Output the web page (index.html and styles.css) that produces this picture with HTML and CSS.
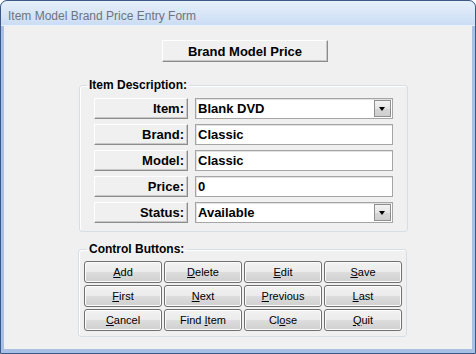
FILE: index.html
```html
<!DOCTYPE html>
<html lang="en">
<head>
    <meta charset="UTF-8">
    <title>Item Model Brand Price Entry Form</title>
    <link rel="stylesheet" href="styles.css">
</head>
<body>
    <div class="window">
        <div class="titlebar">Item Model Brand Price Entry Form</div>

        <div class="client">
            <button class="classic heading">Brand Model Price</button>

            <!-- Item details -->
            <fieldset class="group details">
                <legend>Item Description:</legend>
                <div class="row">
                    <span class="classic label">Item:</span>
                    <div class="field combo"><span>Blank DVD</span><span class="drop"></span></div>
                </div>
                <div class="row">
                    <span class="classic label">Brand:</span>
                    <div class="field"><span>Classic</span></div>
                </div>
                <div class="row">
                    <span class="classic label">Model:</span>
                    <div class="field"><span>Classic</span></div>
                </div>
                <div class="row">
                    <span class="classic label">Price:</span>
                    <div class="field"><span>0</span></div>
                </div>
                <div class="row">
                    <span class="classic label">Status:</span>
                    <div class="field combo"><span>Available</span><span class="drop"></span></div>
                </div>
            </fieldset>

            <!-- Control buttons -->
            <fieldset class="group controls">
                <legend>Control Buttons:</legend>
                <div class="btn-grid">
                    <button class="btn"><u>A</u>dd</button>
                    <button class="btn"><u>D</u>elete</button>
                    <button class="btn"><u>E</u>dit</button>
                    <button class="btn"><u>S</u>ave</button>
                    <button class="btn"><u>F</u>irst</button>
                    <button class="btn"><u>N</u>ext</button>
                    <button class="btn"><u>P</u>revious</button>
                    <button class="btn"><u>L</u>ast</button>
                    <button class="btn"><u>C</u>ancel</button>
                    <button class="btn">Find <u>I</u>tem</button>
                    <button class="btn">Cl<u>o</u>se</button>
                    <button class="btn"><u>Q</u>uit</button>
                </div>
            </fieldset>
        </div>
    </div>
</body>
</html>
```

FILE: styles.css
```css
body {
    margin: 0;
    padding: 0;
    font-family: "Liberation Sans", Arial, sans-serif;
    background: #fff;
}

/* Window frame */
.window {
    width: 476px;
    height: 354px;
    box-sizing: border-box;
    border: 1px solid #3a5987;
    border-radius: 7px 7px 0 0;
    background: #a7c0e4;
    display: flex;
    flex-direction: column;
    overflow: hidden;
}

.titlebar {
    height: 25px;
    box-sizing: border-box;
    padding: 8px 0 0 7px;
    font-size: 12px;
    line-height: 14px;
    color: #6d7480;
    background: linear-gradient(#e6effa, #cbddf4);
    border-bottom: 1px solid #e9f1fb;
    border-radius: 6px 6px 0 0;
}

.client {
    flex: 1;
    margin: 0 3px 4px 3px;
    background: #f0f0f0;
}

/* Classic raised look */
.classic {
    display: block;
    box-sizing: border-box;
    background: #f0f0f0;
    border: 1px solid;
    border-color: #fff #8c8c8c #8c8c8c #fff;
    box-shadow: inset -1px -1px 0 #c8c8c8;
    font-family: "Liberation Sans", Arial, sans-serif;
    font-weight: bold;
    font-size: 13px;
    color: #000;
    padding: 0;
}

.heading {
    margin: 14px 0 0 158px;
    width: 166px;
    height: 22px;
    line-height: 19px;
    text-align: center;
}

/* Group boxes */
.group {
    box-sizing: border-box;
    width: 329px;
    border: 1px solid #d5dfe5;
    border-radius: 3px;
    box-shadow: inset 1px 1px 0 #fff;
    min-inline-size: 0;
}

.group legend {
    font-size: 12px;
    font-weight: bold;
    line-height: 14px;
    padding: 0 2px;
    color: #000;
}

.details {
    margin: 16px 0 0 75px;
    padding: 6px 14px 8px 14px;
}

.details legend {
    margin-left: -7px;
}

.controls {
    margin: 10px 0 0 74px;
    padding: 5px 4px 5px 5px;
}

.controls legend {
    margin-left: 3px;
}

.row {
    display: flex;
    gap: 7px;
    height: 21px;
    margin-bottom: 5px;
}

.row:last-child {
    margin-bottom: 0;
}

.label {
    width: 94px;
    height: 21px;
    line-height: 19px;
    text-align: right;
    padding-right: 3px;
}

.field {
    flex: 1;
    box-sizing: border-box;
    height: 21px;
    background: #fff;
    border: 1px solid #a5a5a5;
    box-shadow: inset 1px 1px 0 #e2e2e2;
    display: flex;
    align-items: center;
    justify-content: space-between;
    padding-left: 2px;
    font-size: 13px;
    font-weight: bold;
    line-height: 19px;
}

.drop {
    width: 17px;
    height: 17px;
    box-sizing: border-box;
    margin-right: 1px;
    border: 1px solid #8e8f8f;
    background: linear-gradient(#f4f4f4, #e4e4e4 50%, #d6d6d6 51%, #cfcfcf);
    position: relative;
}

.drop::after {
    content: "";
    position: absolute;
    left: 4px;
    top: 6px;
    border-left: 3.5px solid transparent;
    border-right: 3.5px solid transparent;
    border-top: 4px solid #000;
}

/* Control buttons */
.btn-grid {
    display: grid;
    grid-template-columns: repeat(4, 78px);
    grid-auto-rows: 22px;
    gap: 2px;
}

.btn {
    box-sizing: border-box;
    border: 1px solid #707070;
    border-radius: 3px;
    background: linear-gradient(#f2f2f2, #ebebeb 48%, #dddddd 52%, #cfcfcf);
    box-shadow: inset 0 0 0 1px #fcfcfc;
    font-family: "Liberation Sans", Arial, sans-serif;
    font-size: 11px;
    color: #000;
    padding: 0;
    line-height: 20px;
}
```
